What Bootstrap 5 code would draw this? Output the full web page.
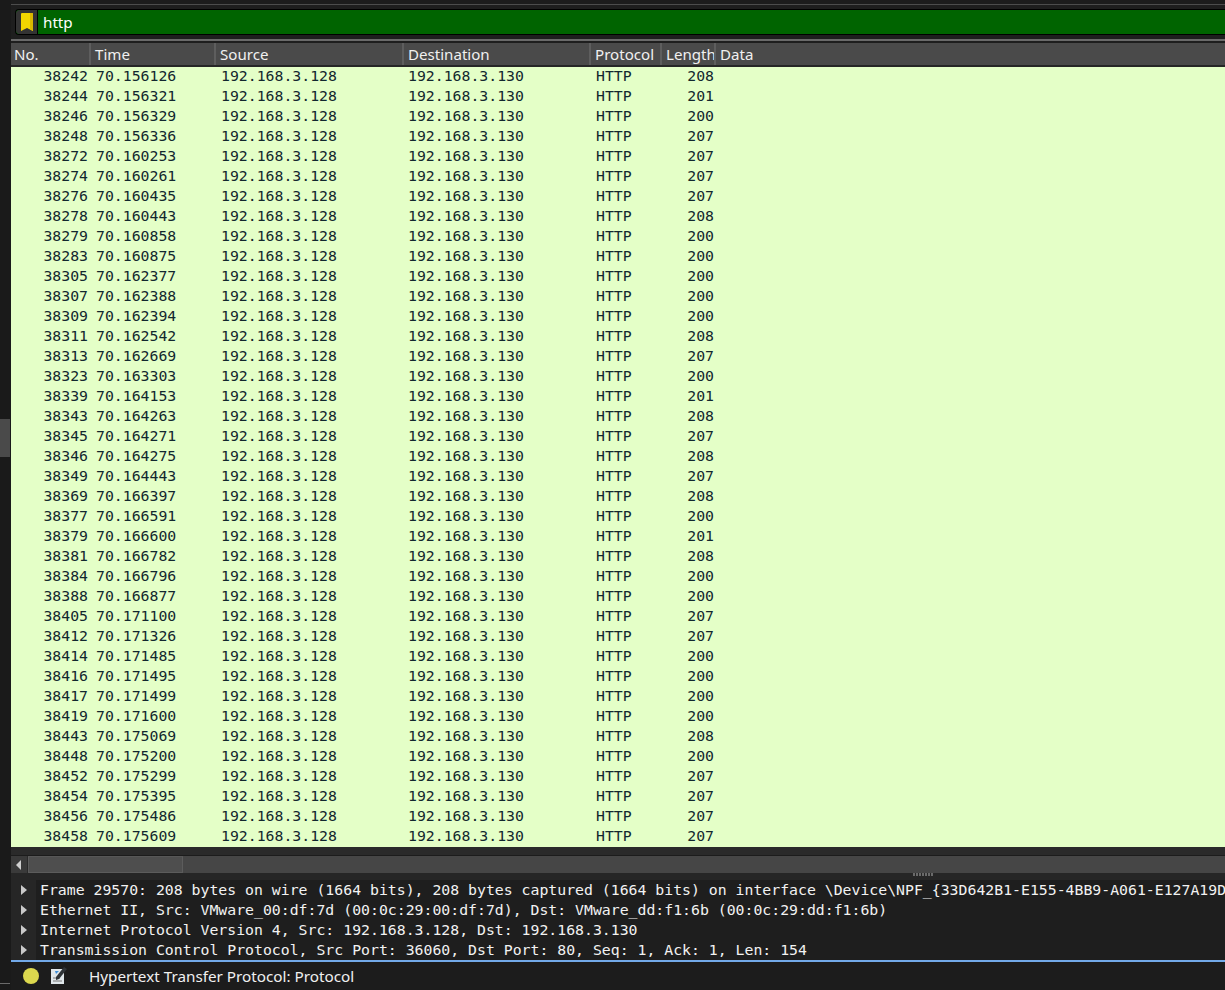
<!DOCTYPE html>
<html lang="en">
<head>
    <meta charset="UTF-8">
    <meta name="viewport" content="width=device-width, initial-scale=1.0">
    <title>Packet capture</title>
    <link href="https://cdn.jsdelivr.net/npm/bootstrap@5.3.0/dist/css/bootstrap.min.css" rel="stylesheet">
    <style>
        html, body { height: 990px; overflow: hidden; }
        body { background: #1e1e1e; font-family: "Noto Sans", "Open Sans", sans-serif; color: #f0f0f0; }
        .edge-strip { width: 11px; background: #1a1a1a; }
        .edge-thumb { height: 38px; margin-top: 419px; width: 10px; background: #4a4a4a; }
        .edge-line { height: 1px; width: 10px; background: #6a6a6a; margin-top: 526px; }
        .main-pane { min-width: 0; }

        .top-rule { height: 5px; margin-bottom: 4px; background: #1c1c1c; border-bottom: 1px solid #4c4c4c; }
        .filter-bar { height: 26px; background: #006400; border: 1px solid #000; border-right: 0; border-radius: 4px 0 0 4px; margin-left: 4px; font-size: 15.2px; }
        .filter-mark { width: 22px; background: #333; border-right: 1px solid #000; border-radius: 4px 0 0 4px; }
        .filter-text { padding-left: 5px; color: #fff; line-height: 24px; }
        .filter-gap { height: 4px; }
        .head-rule { height: 2px; background: #6a6a6a; margin-bottom: 2px; }

        .pkt-head { height: 24px; background: #4a4a4a; border-bottom: 2px solid #262626; font-size: 15.1px; line-height: 23px; }
        .pkt-head div { padding-left: 4px; border-right: 2px solid #5e5e5e; white-space: nowrap; overflow: hidden; }
        .c-no { width: 80px; padding-left: 3px !important; }
        .c-time { width: 125px; }
        .c-src { width: 188px; }
        .c-dst { width: 187px; }
        .c-proto { width: 71px; }
        .c-len { width: 54px; }
        .pkt-head .c-data { border-right: 0; flex-grow: 1; }

        .pkt-list { height: 780px; background: #e4ffc7; overflow: hidden; }
        .pkt-list .table { --bs-table-bg: #e4ffc7; --bs-table-color: #12272e; table-layout: fixed; width: 100%; margin: 0; }
        .pkt-list td, .mono-row { font-family: "DejaVu Sans Mono", "Liberation Mono", monospace; font-size: 14.82px; }
        .pkt-list td { height: 20px; padding: 0 0 2px 5px; line-height: 18px; white-space: nowrap; border: 0; }
        .pkt-list td.num { text-align: right; padding: 0 0 2px 0; }
        .pkt-list .w-no { width: 77px; }
        .pkt-list .w-time { width: 128px; }
        .pkt-list td.t-time { padding-left: 8px; }
        .pkt-list .w-src { width: 187px; }
        .pkt-list .w-dst { width: 188px; }
        .pkt-list .w-proto { width: 71px; }
        .pkt-list .w-len { width: 52px; }

        .hscroll-gap { height: 9px; background: #2a2a2a; border-bottom: 1px solid #1c1c1c; }
        .hscroll { height: 17px; background: #464646; }
        .hscroll-btn { width: 17px; background: #3a3a3a; border-right: 1px solid #2a2a2a; }
        .hscroll-thumb { width: 155px; background: #4e4e4e; border: 1px solid #5c5c5c; border-top-color: #575757; }
        .split-grip { height: 7px; background: #262626; }
        .split-dots { width: 21px; height: 3px; margin-left: 902px; background: repeating-linear-gradient(90deg, #6a6a6a 0 2px, #262626 2px 3px); }

        .detail-pane { height: 82px; background: #1e1e1e; border-bottom: 2px solid #72a9e8; }
        .detail-row { height: 20px; }
        .detail-arrow { width: 25px; background: #262626; }
        .mono-row { color: #f2f2f2; line-height: 20px; white-space: nowrap; padding-left: 4px; overflow: hidden; }
        .status-bar { background: #1c1c1c; height: 28px; font-size: 15.25px; }
        .status-note { margin-left: 11px; }
        .status-text { margin-left: 21px; }
    </style>
</head>
<body>
<div class="d-flex">
    <div class="edge-strip flex-shrink-0">
        <div class="edge-thumb"></div>
        <div class="edge-line"></div>
    </div>
    <div class="main-pane flex-grow-1 d-flex flex-column">
        <div class="top-rule"></div>
        <div class="filter-bar d-flex">
            <div class="filter-mark d-flex align-items-center justify-content-center">
                <svg width="12" height="18" viewBox="0 0 12 18"><path d="M0 1q0-1 1-1h10q1 0 1 1v17l-6-3-6 3z" fill="#f2d500"/><path d="M9 0h2q1 0 1 1v17l-3-1.500z" fill="#d9b800"/></svg>
            </div>
            <div class="filter-text">http</div>
        </div>
        <div class="filter-gap"></div>
        <div class="head-rule"></div>

        <div class="pkt-head d-flex">
            <div class="c-no">No.</div>
            <div class="c-time">Time</div>
            <div class="c-src">Source</div>
            <div class="c-dst">Destination</div>
            <div class="c-proto">Protocol</div>
            <div class="c-len">Length</div>
            <div class="c-data">Data</div>
        </div>

        <div class="pkt-list">
            <table class="table table-borderless">
                <colgroup>
                    <col class="w-no"><col class="w-time"><col class="w-src"><col class="w-dst"><col class="w-proto"><col class="w-len"><col>
                </colgroup>
                <tbody id="pkt-body"></tbody>
            </table>
        </div>

        <div class="hscroll-gap"></div>
        <div class="hscroll d-flex">
            <div class="hscroll-btn d-flex align-items-center justify-content-center">
                <svg width="6" height="10" viewBox="0 0 6 10"><path d="M5 0v10L0 5z" fill="#d0d0d0"/></svg>
            </div>
            <div class="hscroll-thumb"></div>
        </div>
        <div class="split-grip"><div class="split-dots"></div></div>

        <div class="detail-pane" id="detail-pane"></div>

        <div class="status-bar d-flex align-items-center">
            <svg class="ms-2" width="20" height="20" viewBox="0 0 20 20"><circle cx="12" cy="10" r="8" fill="#dcd84e"/></svg>
            <svg class="status-note" width="18" height="20" viewBox="0 0 18 20">
                <path d="M1 3h13v15H1z" fill="#dfe6ea"/>
                <path d="M3 12h7M3 15h9" stroke="#777" stroke-width="1"/>
                <path d="M5 5h4l-3 3z" fill="#3f8fd8"/>
                <path d="M6 11L14 1l3 2-8 10-3 1z" fill="#2f3438"/>
            </svg>
            <span class="status-text">Hypertext Transfer Protocol: Protocol</span>
        </div>
    </div>
</div>

<script>
    const packets = [
        [38242,"156126",208],[38244,"156321",201],[38246,"156329",200],[38248,"156336",207],
        [38272,"160253",207],[38274,"160261",207],[38276,"160435",207],[38278,"160443",208],
        [38279,"160858",200],[38283,"160875",200],[38305,"162377",200],[38307,"162388",200],
        [38309,"162394",200],[38311,"162542",208],[38313,"162669",207],[38323,"163303",200],
        [38339,"164153",201],[38343,"164263",208],[38345,"164271",207],[38346,"164275",208],
        [38349,"164443",207],[38369,"166397",208],[38377,"166591",200],[38379,"166600",201],
        [38381,"166782",208],[38384,"166796",200],[38388,"166877",200],[38405,"171100",207],
        [38412,"171326",207],[38414,"171485",200],[38416,"171495",200],[38417,"171499",200],
        [38419,"171600",200],[38443,"175069",208],[38448,"175200",200],[38452,"175299",207],
        [38454,"175395",207],[38456,"175486",207],[38458,"175609",207]
    ];
    document.getElementById("pkt-body").innerHTML = packets.map(p => `
        <tr>
            <td class="num">${p[0]}</td>
            <td class="t-time">70.${p[1]}</td>
            <td>192.168.3.128</td>
            <td>192.168.3.130</td>
            <td>HTTP</td>
            <td class="num">${p[2]}</td>
            <td></td>
        </tr>`).join("");

    const details = [
        "Frame 29570: 208 bytes on wire (1664 bits), 208 bytes captured (1664 bits) on interface \\Device\\NPF_{33D642B1-E155-4BB9-A061-E127A19D",
        "Ethernet II, Src: VMware_00:df:7d (00:0c:29:00:df:7d), Dst: VMware_dd:f1:6b (00:0c:29:dd:f1:6b)",
        "Internet Protocol Version 4, Src: 192.168.3.128, Dst: 192.168.3.130",
        "Transmission Control Protocol, Src Port: 36060, Dst Port: 80, Seq: 1, Ack: 1, Len: 154"
    ];
    document.getElementById("detail-pane").innerHTML = details.map(d => `
        <div class="detail-row d-flex">
            <div class="detail-arrow d-flex align-items-center justify-content-center flex-shrink-0">
                <svg width="6" height="10" viewBox="0 0 6 10"><path d="M0 0v10l6-5z" fill="#c8c8c8"/></svg>
            </div>
            <div class="mono-row flex-grow-1"></div>
        </div>`).join("");
    document.querySelectorAll(".mono-row").forEach((el, i) => { el.textContent = details[i]; });
</script>
<script src="https://cdn.jsdelivr.net/npm/bootstrap@5.3.0/dist/js/bootstrap.bundle.min.js"></script>
</body>
</html>
